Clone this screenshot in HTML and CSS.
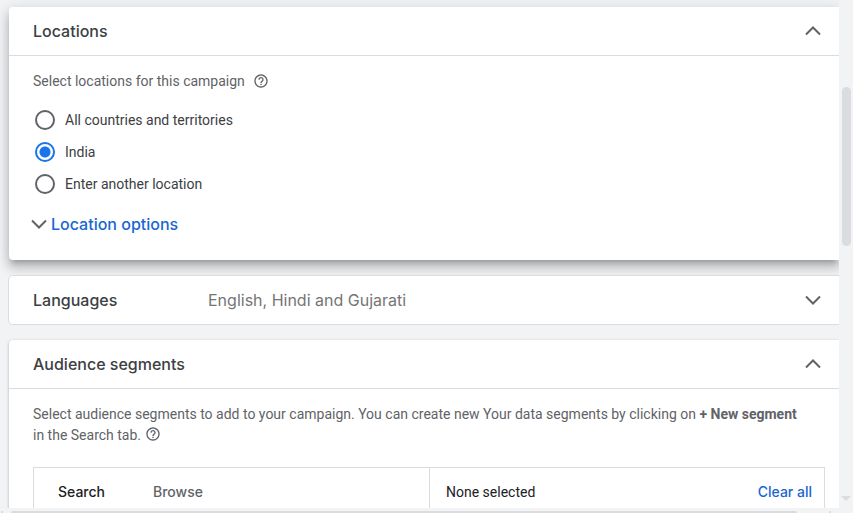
FILE: index.html
```html
<!DOCTYPE html>
<html lang="en">
<head>
<meta charset="utf-8">
<title>Campaign settings</title>
<meta name="viewport" content="width=device-width, initial-scale=1">
<link rel="stylesheet" href="styles.css">
</head>
<body>
<div class="shell">
  <main class="panels">
    <section class="card card-active">
      <header class="card-header card-header-open">
        <h2 class="card-title">Locations</h2>
        <button class="icon-button" type="button" aria-label="Collapse locations" aria-expanded="true">
          <svg class="chevron" viewBox="0 0 18 18" aria-hidden="true"><path d="M2 12.500L9 5.500l7 7"/></svg>
        </button>
      </header>
      <div class="card-body">
        <fieldset class="choices">
          <legend class="prompt">Select locations for this campaign
            <svg class="help" viewBox="0 0 24 24" aria-hidden="true"><path d="M11 18h2v-2h-2v2zm1-16C6.480 2 2 6.480 2 12s4.480 10 10 10 10-4.480 10-10S17.520 2 12 2zm0 18c-4.410 0-8-3.590-8-8s3.590-8 8-8 8 3.590 8 8-3.590 8-8 8zm0-14c-2.210 0-4 1.790-4 4h2c0-1.100.9-2 2-2s2 .9 2 2c0 2-3 1.750-3 5h2c0-2.250 3-2.500 3-5 0-2.210-1.790-4-4-4z"/></svg>
          </legend>
          <label class="choice"><input class="radio" type="radio" name="location">All countries and territories</label>
          <label class="choice"><input class="radio" type="radio" name="location" checked>India</label>
          <label class="choice"><input class="radio" type="radio" name="location">Enter another location</label>
        </fieldset>
        <button class="options-toggle" type="button" aria-expanded="false">
          <svg class="chevron" viewBox="0 0 18 18" aria-hidden="true"><path d="M2 5.500l7 7 7-7"/></svg>Location options
        </button>
      </div>
    </section>

    <section class="card card-closed">
      <header class="card-header">
        <h2 class="card-title card-title-summary">Languages</h2>
        <p class="summary">English, Hindi and Gujarati</p>
        <button class="icon-button" type="button" aria-label="Expand languages" aria-expanded="false">
          <svg class="chevron" viewBox="0 0 18 18" aria-hidden="true"><path d="M2 5.500l7 7 7-7"/></svg>
        </button>
      </header>
    </section>

    <section class="card card-open">
      <header class="card-header card-header-open">
        <h2 class="card-title">Audience segments</h2>
        <button class="icon-button" type="button" aria-label="Collapse audience segments" aria-expanded="true">
          <svg class="chevron" viewBox="0 0 18 18" aria-hidden="true"><path d="M2 12.500L9 5.500l7 7"/></svg>
        </button>
      </header>
      <div class="card-body">
        <p class="description">Select audience segments to add to your campaign. You can create new Your data segments by clicking on <b>+ New segment</b> in the Search tab. <svg class="help help-inline" viewBox="0 0 24 24" aria-hidden="true"><path d="M11 18h2v-2h-2v2zm1-16C6.480 2 2 6.480 2 12s4.480 10 10 10 10-4.480 10-10S17.520 2 12 2zm0 18c-4.410 0-8-3.590-8-8s3.590-8 8-8 8 3.590 8 8-3.590 8-8 8zm0-14c-2.210 0-4 1.790-4 4h2c0-1.100.9-2 2-2s2 .9 2 2c0 2-3 1.750-3 5h2c0-2.250 3-2.500 3-5 0-2.210-1.790-4-4-4z"/></svg></p>
        <div class="picker">
          <div class="picker-tabs" role="tablist" aria-label="Segment source">
            <button class="tab tab-current" type="button" role="tab" aria-selected="true">Search</button>
            <button class="tab" type="button" role="tab" aria-selected="false">Browse</button>
          </div>
          <div class="picker-selection">
            <span>None selected</span>
            <button class="clear" type="button">Clear all</button>
          </div>
        </div>
      </div>
    </section>
  </main>
  <div class="track-y" aria-hidden="true">
    <div class="thumb-y"></div>
    <div class="arrow-down"></div>
  </div>
  <div class="track-x" aria-hidden="true">
    <div class="arrow-left"></div>
    <div class="thumb-x"></div>
    <div class="arrow-right"></div>
  </div>
</div>
</body>
</html>
```

FILE: styles.css
```css
:root {
  --page: #f1f3f4;
  --line: #dadce0;
  --thumb: #dadce0;
  --ink: #3c4043;
  --muted: #5f6368;
  --blue: #1a73e8;
  --link: #1967d2;
  --display: Inter, "Open Sans", sans-serif;
}

* {
  box-sizing: border-box;
}

body {
  margin: 0;
  background: var(--page);
  color: var(--ink);
  font: 14px/20px Roboto, "Liberation Sans", sans-serif;
}

h2,
p {
  margin: 0;
}

button {
  padding: 0;
  border: 0;
  background: none;
  font: inherit;
  color: inherit;
  cursor: pointer;
}

.shell {
  display: grid;
  grid-template: minmax(0, 1fr) 5px / minmax(0, 1fr) 14px;
  height: 100vh;
  overflow: hidden;
}

.panels {
  display: flex;
  flex-direction: column;
  gap: 16px;
  padding: 7px 0 0 9px;
  overflow: hidden;
}

.card {
  flex: none;
  border-radius: 4px 0 0 4px;
  background: #fff;
}

.card-active {
  box-shadow: 0 5px 5px -3px rgba(0, 0, 0, 0.2), 0 8px 10px 1px rgba(0, 0, 0, 0.14), 0 3px 14px 2px rgba(0, 0, 0, 0.12);
}

.card-closed {
  box-shadow: 0 0 0 1px var(--line);
}

.card-open {
  box-shadow: 0 1px 3px rgba(60, 64, 67, 0.4);
}

.card-header {
  display: flex;
  align-items: center;
  height: 48px;
  padding: 0 17px 0 24px;
}

.card-header-open {
  height: 49px;
  border-bottom: 1px solid var(--line);
}

.card-title {
  font: 500 16px/24px var(--display);
}

.card-title-summary {
  flex: 0 0 175px;
}

.summary {
  font: 16px/24px var(--display);
  color: #757575;
}

.icon-button {
  display: flex;
  margin-left: auto;
}

.chevron {
  flex: none;
  width: 18px;
  height: 18px;
  fill: none;
  stroke: var(--muted);
  stroke-width: 2;
}

.card-body {
  padding: 15px 14px 24px 24px;
}

.choices {
  margin: 0;
  padding: 0;
  border: 0;
}

.prompt {
  display: flex;
  align-items: center;
  gap: 8px;
  margin-bottom: 13px;
  padding: 0;
  color: var(--muted);
}

.help {
  width: 16px;
  height: 16px;
  fill: var(--muted);
}

.help-inline {
  vertical-align: -2px;
}

.choice {
  display: flex;
  align-items: center;
  gap: 10px;
  height: 32px;
  padding-left: 2px;
}

.radio {
  width: 20px;
  height: 20px;
  margin: 0;
  appearance: none;
  border: 2px solid var(--muted);
  border-radius: 50%;
}

.radio:checked {
  border-color: var(--blue);
  background: radial-gradient(circle, var(--blue) 5px, transparent 6px);
}

.options-toggle {
  display: flex;
  align-items: center;
  margin-top: 12px;
  margin-left: -3px;
  gap: 3px;
  font: 500 16px/24px var(--display);
  color: var(--link);
}

.description {
  padding-right: 16px;
  line-height: 21px;
  color: var(--muted);
}

.picker {
  display: grid;
  grid-template-columns: 1fr 1fr;
  margin-top: 21px;
  border: 1px solid var(--line);
}

.picker-tabs,
.picker-selection {
  display: flex;
  align-items: center;
  height: 48px;
}

.picker-tabs {
  gap: 48px;
  padding-left: 24px;
}

.picker-selection {
  justify-content: space-between;
  padding: 0 12px 0 16px;
  border-left: 1px solid var(--line);
  color: #202124;
}

.tab,
.clear {
  font: 500 14px/20px var(--display);
  color: var(--muted);
}

.tab-current {
  color: #202124;
}

.clear {
  color: var(--link);
}

.track-y {
  display: flex;
  flex-direction: column;
  align-items: center;
  justify-content: space-between;
  padding: 87px 0 7px;
}

.thumb-y {
  width: 9px;
  height: 159px;
  border-radius: 5px;
  background: var(--thumb);
}

.arrow-down {
  border: solid transparent;
  border-width: 5px 5px 0;
  border-top-color: var(--thumb);
}

.track-x {
  display: flex;
  align-items: flex-end;
  padding-left: 1px;
  overflow: hidden;
}

.thumb-x {
  flex: 0 0 786px;
  height: 2px;
  margin: 0 32px 0 8px;
  border-radius: 2px 2px 0 0;
  background: var(--thumb);
}

.arrow-left,
.arrow-right {
  width: 2px;
  height: 2px;
  background: var(--thumb);
}
```
